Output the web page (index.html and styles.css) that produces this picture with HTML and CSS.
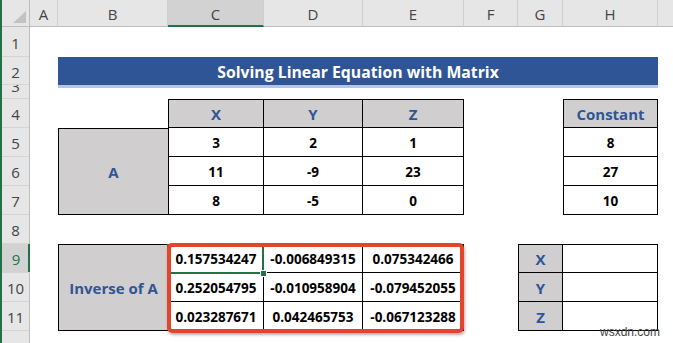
FILE: index.html
```html
<!DOCTYPE html>
<html>
<head>
<meta charset="utf-8">
<link rel="stylesheet" href="styles.css">
</head>
<body>
<div class="sheet">
  <div class="corner"><span class="tri"></span></div>
  <div class="colhead">A</div>
  <div class="colhead">B</div>
  <div class="colhead sel">C</div>
  <div class="colhead">D</div>
  <div class="colhead">E</div>
  <div class="colhead">F</div>
  <div class="colhead">G</div>
  <div class="colhead">H</div>
  <div class="colhead last"></div>

  <div class="rowheads">
    <div class="rh h30">1</div>
    <div class="rh h28">2</div>
    <div class="rh h14 clip"><span>3</span></div>
    <div class="rh">4</div>
    <div class="rh">5</div>
    <div class="rh">6</div>
    <div class="rh">7</div>
    <div class="rh">8</div>
    <div class="rh sel">9</div>
    <div class="rh">10</div>
    <div class="rh">11</div>
    <div class="rh h12 open"></div>
  </div>

  <div class="banner">Solving Linear Equation with Matrix</div>

  <!-- Matrix A -->
  <div class="cell gray cC r4 bt bl br bb">X</div>
  <div class="cell gray cD r4 bt br bb">Y</div>
  <div class="cell gray cE r4 bt br bb">Z</div>
  <div class="cell gray cB m5 bt bl bb">A</div>
  <div class="cell cC r5 bl br bb">3</div>
  <div class="cell cD r5 br bb">2</div>
  <div class="cell cE r5 br bb">1</div>
  <div class="cell cC r6 bl br bb">11</div>
  <div class="cell cD r6 br bb">-9</div>
  <div class="cell cE r6 br bb">23</div>
  <div class="cell cC r7 bl br bb">8</div>
  <div class="cell cD r7 br bb">-5</div>
  <div class="cell cE r7 br bb">0</div>

  <!-- Constant -->
  <div class="cell gray cH r4 bt bl br bb">Constant</div>
  <div class="cell cH r5 bl br bb">8</div>
  <div class="cell cH r6 bl br bb">27</div>
  <div class="cell cH r7 bl br bb">10</div>

  <!-- Inverse -->
  <div class="cell gray cB m9 bt bl bb">Inverse of A</div>
  <div class="cell cC r9 bt bl br bb">0.157534247</div>
  <div class="cell cD r9 bt br bb">-0.006849315</div>
  <div class="cell cE r9 bt br bb">0.075342466</div>
  <div class="cell cC r10 bl br bb">0.252054795</div>
  <div class="cell cD r10 br bb">-0.010958904</div>
  <div class="cell cE r10 br bb">-0.079452055</div>
  <div class="cell cC r11 bl br bb">0.023287671</div>
  <div class="cell cD r11 br bb">0.042465753</div>
  <div class="cell cE r11 br bb">-0.067123288</div>

  <!-- XYZ -->
  <div class="cell gray cG r9 bt bl br bb">X</div>
  <div class="cell cH r9 bt br bb"></div>
  <div class="cell gray cG r10 bl br bb">Y</div>
  <div class="cell cH r10 br bb"></div>
  <div class="cell gray cG r11 bl br bb">Z</div>
  <div class="cell cH r11 br bb"></div>

  <div class="selection"><span class="handle"></span></div>
  <div class="highlight"></div>
  <div class="watermark">wsxdn.com</div>
</div>
</body>
</html>
```

FILE: styles.css
```css
* { box-sizing: border-box; }
html, body { margin: 0; padding: 0; background: #fff; }

.sheet {
  position: relative;
  width: 673px;
  height: 343px;
  overflow: hidden;
  border-left: 2px solid #217346;
  display: grid;
  grid-template-columns: 28px 28px 110px 96px 99px 101px 54px 45px 95px 1fr;
  grid-template-rows: 27px 30px 28px 14px repeat(8, 29px) 12px;
  font-family: "Open Sans", "Liberation Sans", sans-serif;
}

/* column headers */
.corner {
  grid-row: 1; grid-column: 1;
  background: #e6e6e6;
  border-right: 1px solid #bdbdbd;
  border-bottom: 1px solid #bdbdbd;
  position: relative;
}
.tri {
  position: absolute;
  right: 3px; bottom: 3px;
  width: 13px; height: 12px;
  background: #c2c2c2;
  clip-path: polygon(100% 0, 100% 100%, 0 100%);
}
.colhead {
  grid-row: 1;
  background: #e6e6e6;
  border-right: 1px solid #cfcfcf;
  border-bottom: 1px solid #bdbdbd;
  display: flex; align-items: center; justify-content: center;
  padding-top: 2px;
  font: 15px "Open Sans", sans-serif;
  color: #444;
}
.colhead.sel {
  background: #d2d2d2;
  border-bottom: 2px solid #217346;
  color: #444;
}
.colhead.last { border-right: none; }

/* row headers */
.rowheads {
  grid-column: 1;
  grid-row: 2 / -1;
  display: flex;
  flex-direction: column;
  background: #e6e6e6;
  border-right: 1px solid #bdbdbd;
}
.rh {
  height: 29px;
  flex: none;
  display: flex; align-items: center; justify-content: center;
  border-bottom: 1px solid #d4d4d4;
  font: 15px "Open Sans", sans-serif;
  color: #444;
  padding-top: 2px;
}
.rh.h30 { height: 30px; }
.rh.h28 { height: 28px; }
.rh.h14 { height: 14px; }
.rh.h12 { height: 12px; }
.rh.open { border-bottom: none; }
.rh.clip { overflow: hidden; align-items: flex-start; padding-top: 0; }
.rh.clip span { display: block; line-height: 14px; margin-top: -6px; }
.rh.sel {
  background: #d2d2d2;
  color: #217346;
  box-shadow: inset -2px 0 0 #217346;
  margin-right: -1px;
}

/* banner */
.banner {
  grid-column: 3 / 10;
  grid-row: 3;
  height: 28px;
  align-self: start;
  background: #2f5597;
  box-shadow: 0 3px 0 #b4c6e7;
  color: #fff;
  font: bold 15.8px "Open Sans", sans-serif;
  display: flex; align-items: center; justify-content: center;
  padding-top: 1px;
}

/* cells */
.cell {
  display: flex; align-items: center; justify-content: center;
  font: bold 13.5px "Open Sans", sans-serif;
  color: #000;
  background: #fff;
  padding-top: 1px;
}
.gray { background: #d0cece; color: #2f5597; font-size: 15px; }
.bt { border-top: 1px solid #000; }
.bl { border-left: 1px solid #000; }
.br { border-right: 1px solid #000; }
.bb { border-bottom: 1px solid #000; }

.cB { grid-column: 3; }
.cC { grid-column: 4; }
.cD { grid-column: 5; }
.cE { grid-column: 6; }
.cG { grid-column: 8; }
.cH { grid-column: 9; }

.r4 { grid-row: 5; }
.r5 { grid-row: 6; }
.r6 { grid-row: 7; }
.r7 { grid-row: 8; }
.r9 { grid-row: 10; }
.r10 { grid-row: 11; }
.r11 { grid-row: 12; }
.m5 { grid-row: 6 / 9; }
.m9 { grid-row: 10 / 13; }

/* overlays */
.selection {
  position: absolute;
  left: 165px; top: 244px;
  width: 97px; height: 30px;
  border: 2px solid #217346;
}
.handle {
  position: absolute;
  right: -5px; bottom: -5px;
  width: 7px; height: 7px;
  background: #217346;
  border: 1px solid #fff;
}
.highlight {
  position: absolute;
  left: 165px; top: 243px;
  width: 297px; height: 90px;
  border: 4px solid #e3452c;
  border-radius: 5px;
  box-shadow: 1px 2px 3px rgba(0,0,0,0.3);
}
.watermark {
  position: absolute;
  left: 598px; top: 325px;
  font: 12px "Liberation Sans", sans-serif;
  color: #444;
}
```
